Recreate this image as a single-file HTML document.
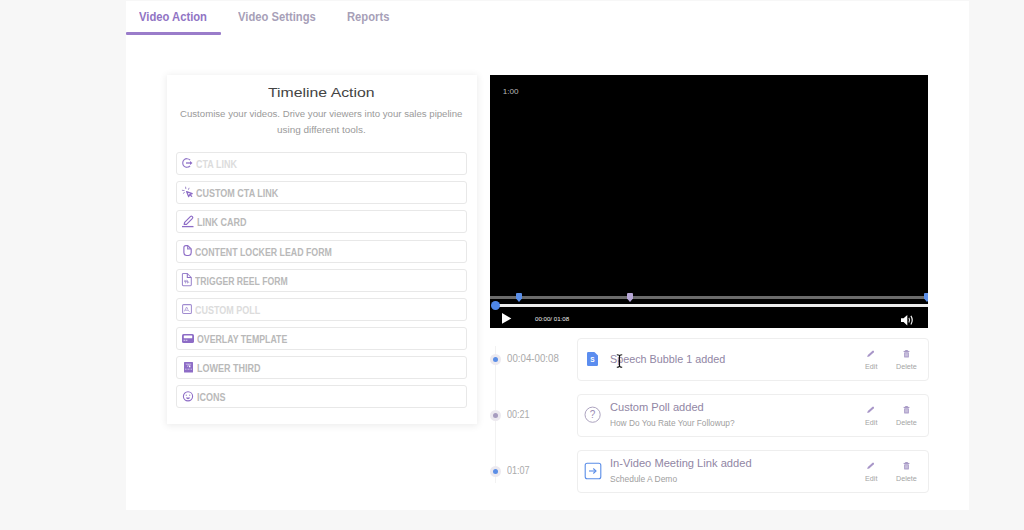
<!DOCTYPE html>
<html><head><meta charset="utf-8">
<style>
*{box-sizing:border-box;margin:0;padding:0}
html,body{width:1024px;height:530px;overflow:hidden;background:#f7f7f7;font-family:"Liberation Sans",sans-serif}
.abs{position:absolute}
svg{position:absolute;overflow:visible}
#panel{position:absolute;left:126px;top:1px;width:843px;height:509px;background:#fff}
.tab{position:absolute;top:9.5px;font-weight:700;font-size:12px;line-height:14px;white-space:nowrap;transform:scaleX(0.935);transform-origin:0 0}
#card{position:absolute;left:167px;top:75px;width:310px;height:349px;background:#fff;box-shadow:0 1px 7px 1px rgba(0,0,0,0.075)}
.title{position:absolute;top:85px;font-size:13.4px;color:#444444;line-height:16px;white-space:nowrap;transform-origin:0 0}
.sub{position:absolute;white-space:nowrap;font-size:9.64px;color:#9a9a9a;line-height:16px}
.item{position:absolute;left:176px;width:291px;height:23px;border:1px solid #e8e8e8;border-radius:3px;background:#fff}
.lbl{position:absolute;font-size:10px;font-weight:700;color:#b9b9b9;white-space:nowrap;line-height:12px;transform:scaleX(0.9);transform-origin:0 0}
.lbl.dis{color:#dcdcdc}
#video{position:absolute;left:490px;top:75px;width:438px;height:253px;background:#000;overflow:hidden}
.tl-card{position:absolute;left:577px;width:352px;height:43px;border:1px solid #eeeeee;border-radius:4px;background:#fff}
.time{position:absolute;left:507px;font-size:9.74px;color:#aaaaaa;white-space:nowrap;line-height:12px}
.dot{position:absolute;left:490px;width:11px;height:11px;border-radius:50%;background:#ece9ef}
.dot i{position:absolute;left:2.6px;top:2.6px;width:5.8px;height:5.8px;border-radius:50%;background:#5b8ee6}
.ttl{position:absolute;left:610px;font-size:10.8px;color:#9186a4;white-space:nowrap;line-height:13px}
.st{position:absolute;left:610px;font-size:8.2px;color:#a0a0a0;white-space:nowrap;line-height:10px}
.act{position:absolute;font-size:7.6px;color:#a4a4a4;white-space:nowrap;line-height:9px;transform:scaleX(0.95);transform-origin:0 0}
</style></head>
<body>
<div id="panel"></div>
<!-- tabs -->
<div class="tab" style="left:139px;color:#9174c4">Video Action</div>
<div class="tab" style="left:238px;color:#a79fb8">Video Settings</div>
<div class="tab" style="left:347px;color:#a79fb8">Reports</div>
<div class="abs" style="left:126px;top:32px;width:95px;height:2.5px;background:#9a7cca;border-radius:1px"></div>

<!-- timeline action card -->
<div id="card"></div>
<div class="title" style="left:268px;transform:scaleX(1.18)">Timeline Action</div>
<div class="sub" style="left:180px;top:106px">Customise your videos. Drive your viewers into your sales pipeline</div>
<div class="sub" style="left:277px;top:122px;font-size:9.95px">using different tools.</div>

<div class="item" style="top:152px"></div>
<div class="item" style="top:181px"></div>
<div class="item" style="top:210px"></div>
<div class="item" style="top:240px"></div>
<div class="item" style="top:269px"></div>
<div class="item" style="top:298px"></div>
<div class="item" style="top:327px"></div>
<div class="item" style="top:356px"></div>
<div class="item" style="top:385px"></div>

<div class="lbl dis" style="left:196px;top:159px">CTA LINK</div>
<div class="lbl" style="left:196px;top:188px">CUSTOM CTA LINK</div>
<div class="lbl" style="left:197px;top:217px">LINK CARD</div>
<div class="lbl" style="left:195px;top:247px;font-size:10px;transform:scaleX(0.88)">CONTENT LOCKER LEAD FORM</div>
<div class="lbl" style="left:195px;top:276px;transform:scaleX(0.865)">TRIGGER REEL FORM</div>
<div class="lbl dis" style="left:195px;top:305px">CUSTOM POLL</div>
<div class="lbl" style="left:197px;top:334px;font-size:10px;transform:scaleX(0.875)">OVERLAY TEMPLATE</div>
<div class="lbl" style="left:197px;top:363px">LOWER THIRD</div>
<div class="lbl" style="left:197px;top:392px">ICONS</div>

<!-- item icons -->
<svg style="left:181px;top:157px" width="12" height="12" viewBox="0 0 12 12">
  <path d="M9.1,3.0 A4.3,4.3 0 1 0 9.1,9.0" fill="none" stroke="#9479ca" stroke-width="1.15"/>
  <path d="M5,6 H9.5" stroke="#8d6cc6" stroke-width="1.3"/>
  <path d="M11.5,6 L9,3.9 L9,8.1 Z" fill="#8d6cc6"/>
</svg>
<svg style="left:181px;top:186px" width="13" height="12" viewBox="0 0 13 12">
  <g stroke="#a08ccc" stroke-width="1" stroke-linecap="round">
    <path d="M4.6,1.1 L4.8,2.6"/><path d="M8.0,2.2 L7.5,3.4"/><path d="M1.3,4.3 L3.2,4.6"/><path d="M2.3,7.3 L3.4,6.6"/>
  </g>
  <path d="M5.6,5.6 L11.2,7.6 L8.9,8.5 L7.6,10.6 Z" fill="#fff" stroke="#8d6cc6" stroke-width="1.25" stroke-linejoin="round"/>
  <path d="M9,8.6 L10.7,10.4" stroke="#8d6cc6" stroke-width="1.25" stroke-linecap="round"/>
</svg>
<svg style="left:181px;top:215px" width="13" height="13" viewBox="0 0 13 13">
  <path d="M3.2,9.4 L3.6,7.4 L9.6,1.4 Q10.3,0.8 11,1.4 L11.5,1.9 Q12.1,2.6 11.5,3.3 L5.5,9.3 Z" fill="none" stroke="#8d6cc6" stroke-width="1.2" stroke-linejoin="round"/>
  <path d="M1,11.6 H12.5" stroke="#8d6cc6" stroke-width="1.3"/>
</svg>
<svg style="left:182px;top:244px" width="11" height="13" viewBox="0 0 11 13">
  <path d="M1.9,3.6 Q1.9,1.6 3.9,1.6 H5.8 L9.2,5.0 V8.8 Q9.2,11.5 6.5,11.5 H4.6 Q1.9,11.5 1.9,8.8 Z" fill="none" stroke="#8d6cc6" stroke-width="1.15" stroke-linejoin="round"/>
  <path d="M5.6,1.8 V4.9 H9.0" fill="none" stroke="#9a82cc" stroke-width="1.1"/>
</svg>
<svg style="left:181px;top:272px" width="12" height="15" viewBox="0 0 12 15">
  <path d="M2.3,1.5 H6.3 L10.3,5.5 V12.8 Q10.3,13.7 9.4,13.7 H2.3 Q1.4,13.7 1.4,12.8 V2.4 Q1.4,1.5 2.3,1.5 Z" fill="none" stroke="#9a84cc" stroke-width="1.05" stroke-linejoin="round"/>
  <path d="M6.3,1.6 V5.5 H10.2" fill="none" stroke="#8d6cc6" stroke-width="1.05"/>
  <path d="M3.3,8.6 Q4,7.6 4.6,8.6 V11.4 M5.2,8.6 Q5.9,7.6 6.5,8.6 V11.4 M3,9.6 H7.4 M7.2,10.4 L8.2,10.4" fill="none" stroke="#a895d2" stroke-width="0.85"/>
</svg>
<svg style="left:181px;top:303px" width="12" height="12" viewBox="0 0 12 12">
  <rect x="1.6" y="1.6" width="8.8" height="8.8" rx="1" fill="none" stroke="#a08bd0" stroke-width="1.05"/>
  <path d="M3.3,8.4 L5.6,4 L6.8,6.4 M4.2,7.2 H7.2 L8.4,8.6" fill="none" stroke="#ad9cd6" stroke-width="0.9"/>
</svg>
<svg style="left:181px;top:333px" width="14" height="11" viewBox="0 0 14 11">
  <rect x="1" y="1" width="12" height="9" rx="1.6" fill="#8d6cc6"/>
  <rect x="2.8" y="2.6" width="8.4" height="2.6" rx="0.5" fill="#fff"/>
  <rect x="2.6" y="6.8" width="1.6" height="0.9" fill="#e8e0f5"/>
  <rect x="4.8" y="6.8" width="1.6" height="0.9" fill="#e8e0f5"/>
</svg>
<svg style="left:183px;top:361px" width="11" height="12" viewBox="0 0 11 12">
  <rect x="1" y="1" width="9" height="10.5" rx="0.5" fill="#8d6cc6"/>
  <path d="M2.8,3.2 H8.2 M5.5,3.5 L4.5,6" stroke="#d9cff0" stroke-width="0.8"/>
  <rect x="6" y="4.5" width="1.4" height="1.8" fill="#fff"/>
  <path d="M2,8.2 H9" stroke="#e0d8f2" stroke-width="0.8" stroke-dasharray="1 0.5"/>
</svg>
<svg style="left:182px;top:390px" width="12" height="12" viewBox="0 0 12 12">
  <circle cx="6" cy="6.3" r="4.6" fill="none" stroke="#8d6cc6" stroke-width="1.1"/>
  <circle cx="4.3" cy="5.2" r="0.7" fill="#a996d2"/>
  <circle cx="7.7" cy="5.2" r="0.7" fill="#a996d2"/>
  <path d="M3.9,7.4 H8.1 Q7.6,9.2 6,9.2 Q4.4,9.2 3.9,7.4 Z" fill="#8d6cc6"/>
</svg>

<!-- video -->
<div id="video">
  <div class="abs" style="left:12.7px;top:11.5px;font-size:8.1px;color:#b8b8b8;line-height:10px">1:00</div>
  <div class="abs" style="left:0;top:221px;width:438px;height:3px;background:#6b6b6b"></div>
  <div class="abs" style="left:5px;top:229px;width:433px;height:2.5px;background:#ececec"></div>
  <div class="abs" style="left:0.5px;top:225.5px;width:9px;height:9px;border-radius:50%;background:#4f87e8"></div>
  <svg style="left:26px;top:218px" width="6" height="9" viewBox="0 0 6 9"><path d="M1,0 H5 Q6,0 6,1 V5.5 L3,9 L0,5.5 V1 Q0,0 1,0 Z" fill="#5a8ee8"/></svg>
  <svg style="left:137px;top:218px" width="6" height="9" viewBox="0 0 6 9"><path d="M1,0 H5 Q6,0 6,1 V5.5 L3,9 L0,5.5 V1 Q0,0 1,0 Z" fill="#b6a6d6"/></svg>
  <svg style="left:434px;top:218px" width="6" height="9" viewBox="0 0 6 9"><path d="M1,0 H5 Q6,0 6,1 V5.5 L3,9 L0,5.5 V1 Q0,0 1,0 Z" fill="#5a8ee8"/></svg>
  <svg style="left:12px;top:237.5px" width="10" height="11" viewBox="0 0 10 11"><path d="M0,0 L9.3,5.4 L0,10.8 Z" fill="#fff"/></svg>
  <div class="abs" style="left:45px;top:240px;font-size:6.15px;color:#f0f0f0;line-height:7px;white-space:nowrap">00:00/ 01:08</div>
  <svg style="left:411px;top:239.5px" width="13" height="11" viewBox="0 0 13 11">
    <path d="M0,3.3 H2.6 L6.3,0 V10.4 L2.6,7.1 H0 Z" fill="#fff"/>
    <path d="M7.9,2.9 Q9.4,5.2 7.9,7.5" fill="none" stroke="#ddd" stroke-width="1.1"/>
    <path d="M9.9,0.9 Q12.6,5.2 9.9,9.5" fill="none" stroke="#fff" stroke-width="1.1"/>
  </svg>
</div>

<!-- timeline list -->
<div class="abs" style="left:495px;top:346px;width:1px;height:137px;background:#f2f2f2"></div>
<div class="dot" style="top:354px"><i></i></div>
<div class="dot" style="top:410px"><i style="background:#a79cbf"></i></div>
<div class="dot" style="top:466px"><i></i></div>
<div class="time" style="top:352.5px;font-size:10.4px;transform:scaleX(0.935);transform-origin:0 0">00:04-00:08</div>
<div class="time" style="top:408.5px;font-size:10.4px;transform:scaleX(0.87);transform-origin:0 0">00:21</div>
<div class="time" style="top:464.5px;font-size:10.4px;transform:scaleX(0.87);transform-origin:0 0">01:07</div>

<div class="tl-card" style="top:338px"></div>
<div class="tl-card" style="top:394px"></div>
<div class="tl-card" style="top:450px"></div>

<div class="ttl" style="top:353px">Speech Bubble 1 added</div>
<div class="ttl" style="top:401px;font-size:11.1px">Custom Poll added</div>
<div class="st" style="top:417.5px;font-size:8.3px">How Do You Rate Your Followup?</div>
<div class="ttl" style="top:457px;font-size:11.15px">In-Video Meeting Link added</div>
<div class="st" style="top:473.5px;font-size:8.45px">Schedule A Demo</div>

<!-- card icons -->
<svg style="left:587px;top:352px" width="11" height="14" viewBox="0 0 11 14">
  <path d="M1.2,0 H7.4 L11,3.6 V12.8 Q11,14 9.8,14 H1.2 Q0,14 0,12.8 V1.2 Q0,0 1.2,0 Z" fill="#5b8def"/>
  <text x="5.5" y="9.6" font-size="6.5" font-weight="700" fill="#fff" text-anchor="middle" font-family="Liberation Sans">S</text>
</svg>
<svg style="left:584px;top:406px" width="17" height="17" viewBox="0 0 17 17">
  <circle cx="8.6" cy="8.7" r="7.6" fill="none" stroke="#a399b8" stroke-width="0.9"/>
  <text x="8.6" y="12.2" font-size="10" fill="#9a8db5" text-anchor="middle" font-family="Liberation Sans">?</text>
</svg>
<svg style="left:584px;top:462px" width="18" height="18" viewBox="0 0 18 18">
  <rect x="1.2" y="1.2" width="15.6" height="15.6" rx="2" fill="none" stroke="#5a8de8" stroke-width="1.1"/>
  <path d="M5,9 H11.5" stroke="#5a8de8" stroke-width="1.1"/>
  <path d="M9.3,6.5 L12,9 L9.3,11.5" fill="none" stroke="#5a8de8" stroke-width="1.1"/>
</svg>

<!-- edit / delete -->
<svg style="left:866px;top:350px" width="9" height="8" viewBox="0 0 9 8"><path d="M1.2,6.9 L1.8,5.0 L6.3,0.9 Q7.1,0.3 7.8,1.0 Q8.4,1.7 7.7,2.4 L3.2,6.5 Z" fill="#a896c8"/></svg>
<svg style="left:903px;top:350px" width="7" height="8" viewBox="0 0 7 8"><rect x="0.6" y="0.9" width="5.8" height="1.1" fill="#a99bc6"/><rect x="2.2" y="0" width="2.6" height="1" fill="#a99bc6"/><rect x="1.1" y="2.3" width="4.8" height="5.1" rx="0.4" fill="#ad9fcb"/><rect x="2.1" y="3.2" width="2.8" height="3.2" fill="#c9c0dc"/></svg>
<div class="act" style="left:865px;top:362px">Edit</div>
<div class="act" style="left:896px;top:362px">Delete</div>

<svg style="left:866px;top:406px" width="9" height="8" viewBox="0 0 9 8"><path d="M1.2,6.9 L1.8,5.0 L6.3,0.9 Q7.1,0.3 7.8,1.0 Q8.4,1.7 7.7,2.4 L3.2,6.5 Z" fill="#a896c8"/></svg>
<svg style="left:903px;top:406px" width="7" height="8" viewBox="0 0 7 8"><rect x="0.6" y="0.9" width="5.8" height="1.1" fill="#a99bc6"/><rect x="2.2" y="0" width="2.6" height="1" fill="#a99bc6"/><rect x="1.1" y="2.3" width="4.8" height="5.1" rx="0.4" fill="#ad9fcb"/><rect x="2.1" y="3.2" width="2.8" height="3.2" fill="#c9c0dc"/></svg>
<div class="act" style="left:865px;top:418px">Edit</div>
<div class="act" style="left:896px;top:418px">Delete</div>

<svg style="left:866px;top:462px" width="9" height="8" viewBox="0 0 9 8"><path d="M1.2,6.9 L1.8,5.0 L6.3,0.9 Q7.1,0.3 7.8,1.0 Q8.4,1.7 7.7,2.4 L3.2,6.5 Z" fill="#a896c8"/></svg>
<svg style="left:903px;top:462px" width="7" height="8" viewBox="0 0 7 8"><rect x="0.6" y="0.9" width="5.8" height="1.1" fill="#a99bc6"/><rect x="2.2" y="0" width="2.6" height="1" fill="#a99bc6"/><rect x="1.1" y="2.3" width="4.8" height="5.1" rx="0.4" fill="#ad9fcb"/><rect x="2.1" y="3.2" width="2.8" height="3.2" fill="#c9c0dc"/></svg>
<div class="act" style="left:865px;top:474px">Edit</div>
<div class="act" style="left:896px;top:474px">Delete</div>

<!-- I-beam cursor -->
<svg style="left:616px;top:354px" width="7" height="14" viewBox="0 0 7 14">
  <path d="M0.8,0.7 Q3.5,0.7 3.5,2.5 V11.5 Q3.5,13.3 0.8,13.3 M6.2,0.7 Q3.5,0.7 3.5,2.5 M3.5,11.5 Q3.5,13.3 6.2,13.3" fill="none" stroke="#111" stroke-width="1.1"/>
  <path d="M2.5,7 H4.5" stroke="#111" stroke-width="0.8"/>
</svg>
</body></html>
